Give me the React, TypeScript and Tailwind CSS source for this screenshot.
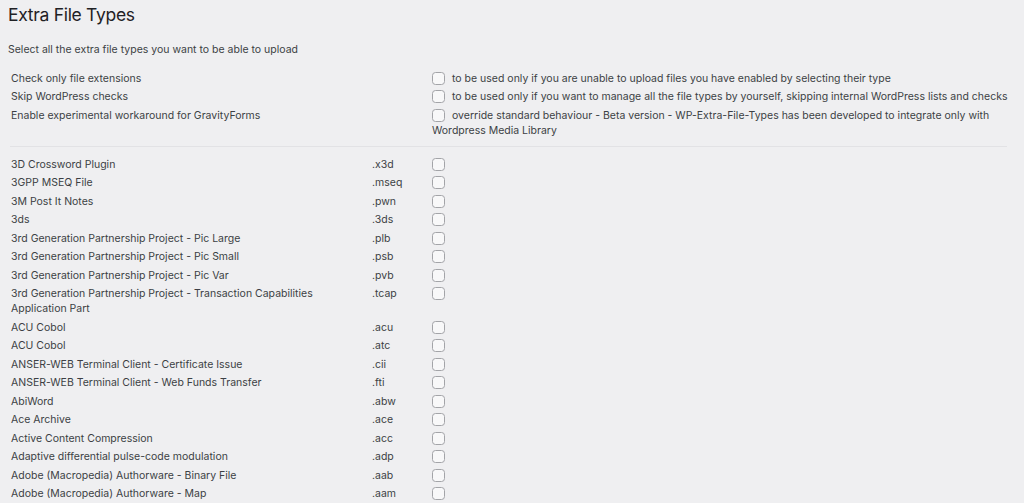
import type { ReactNode } from "react"

const fileTypes: [string, string][] = [
  ["3D Crossword Plugin", ".x3d"],
  ["3GPP MSEQ File", ".mseq"],
  ["3M Post It Notes", ".pwn"],
  ["3ds", ".3ds"],
  ["3rd Generation Partnership Project - Pic Large", ".plb"],
  ["3rd Generation Partnership Project - Pic Small", ".psb"],
  ["3rd Generation Partnership Project - Pic Var", ".pvb"],
  ["3rd Generation Partnership Project - Transaction Capabilities Application Part", ".tcap"],
  ["ACU Cobol", ".acu"],
  ["ACU Cobol", ".atc"],
  ["ANSER-WEB Terminal Client - Certificate Issue", ".cii"],
  ["ANSER-WEB Terminal Client - Web Funds Transfer", ".fti"],
  ["AbiWord", ".abw"],
  ["Ace Archive", ".ace"],
  ["Active Content Compression", ".acc"],
  ["Adaptive differential pulse-code modulation", ".adp"],
  ["Adobe (Macropedia) Authorware - Binary File", ".aab"],
  ["Adobe (Macropedia) Authorware - Map", ".aam"],
]

const options: [string, string][] = [
  ["Check only file extensions", "to be used only if you are unable to upload files you have enabled by selecting their type"],
  [
    "Skip WordPress checks",
    "to be used only if you want to manage all the file types by yourself, skipping internal WordPress lists and checks",
  ],
  [
    "Enable experimental workaround for GravityForms",
    "override standard behaviour - Beta version - WP-Extra-File-Types has been developed to integrate only with Wordpress Media Library",
  ],
]

function Checkbox() {
  return (
    <span className="inline-block h-[13px] w-[13px] shrink-0 rounded-[3.5px] border border-[#a3a4a8] bg-[#f8f8f9] align-[-3px]" />
  )
}

function Row({ children }: { children: ReactNode }) {
  return <div className="py-[1.75px] leading-[15px]">{children}</div>
}

export default function App() {
  return (
    <div
      className="h-[503px] w-full overflow-hidden bg-[#efeff1] text-[10.5px] text-[#3c3f44]"
      style={{ fontFamily: "Inter, 'Noto Sans', sans-serif" }}
    >
      <h1 className="pl-[8px] pt-[3px] text-[17.5px] leading-[24px] tracking-[-0.3px] text-[#1f2125]">Extra File Types</h1>
      <p className="mt-[15px] pl-[8px] leading-[15px]">Select all the extra file types you want to be able to upload</p>

      <div className="mt-[12px] pl-[11px]">
        {options.map(([label, description]) => (
          <Row key={label}>
            <div className="grid grid-cols-[421px_1fr] pr-[8px]">
              <span>{label}</span>
              <span>
                <Checkbox />
                <span className="ml-[7px]">{description}</span>
              </span>
            </div>
          </Row>
        ))}
      </div>

      <div className="ml-[10px] mr-[17px] mt-[6.5px] h-px bg-[#e2e2e5]" />

      <div className="mt-[8px] pl-[11px]">
        {fileTypes.map(([name, ext]) => (
          <Row key={ext}>
            <div className="grid grid-cols-[361px_60px_1fr]">
              <span className="pr-[40px]">{name}</span>
              <span>{ext}</span>
              <span>
                <Checkbox />
              </span>
            </div>
          </Row>
        ))}
      </div>
    </div>
  )
}
